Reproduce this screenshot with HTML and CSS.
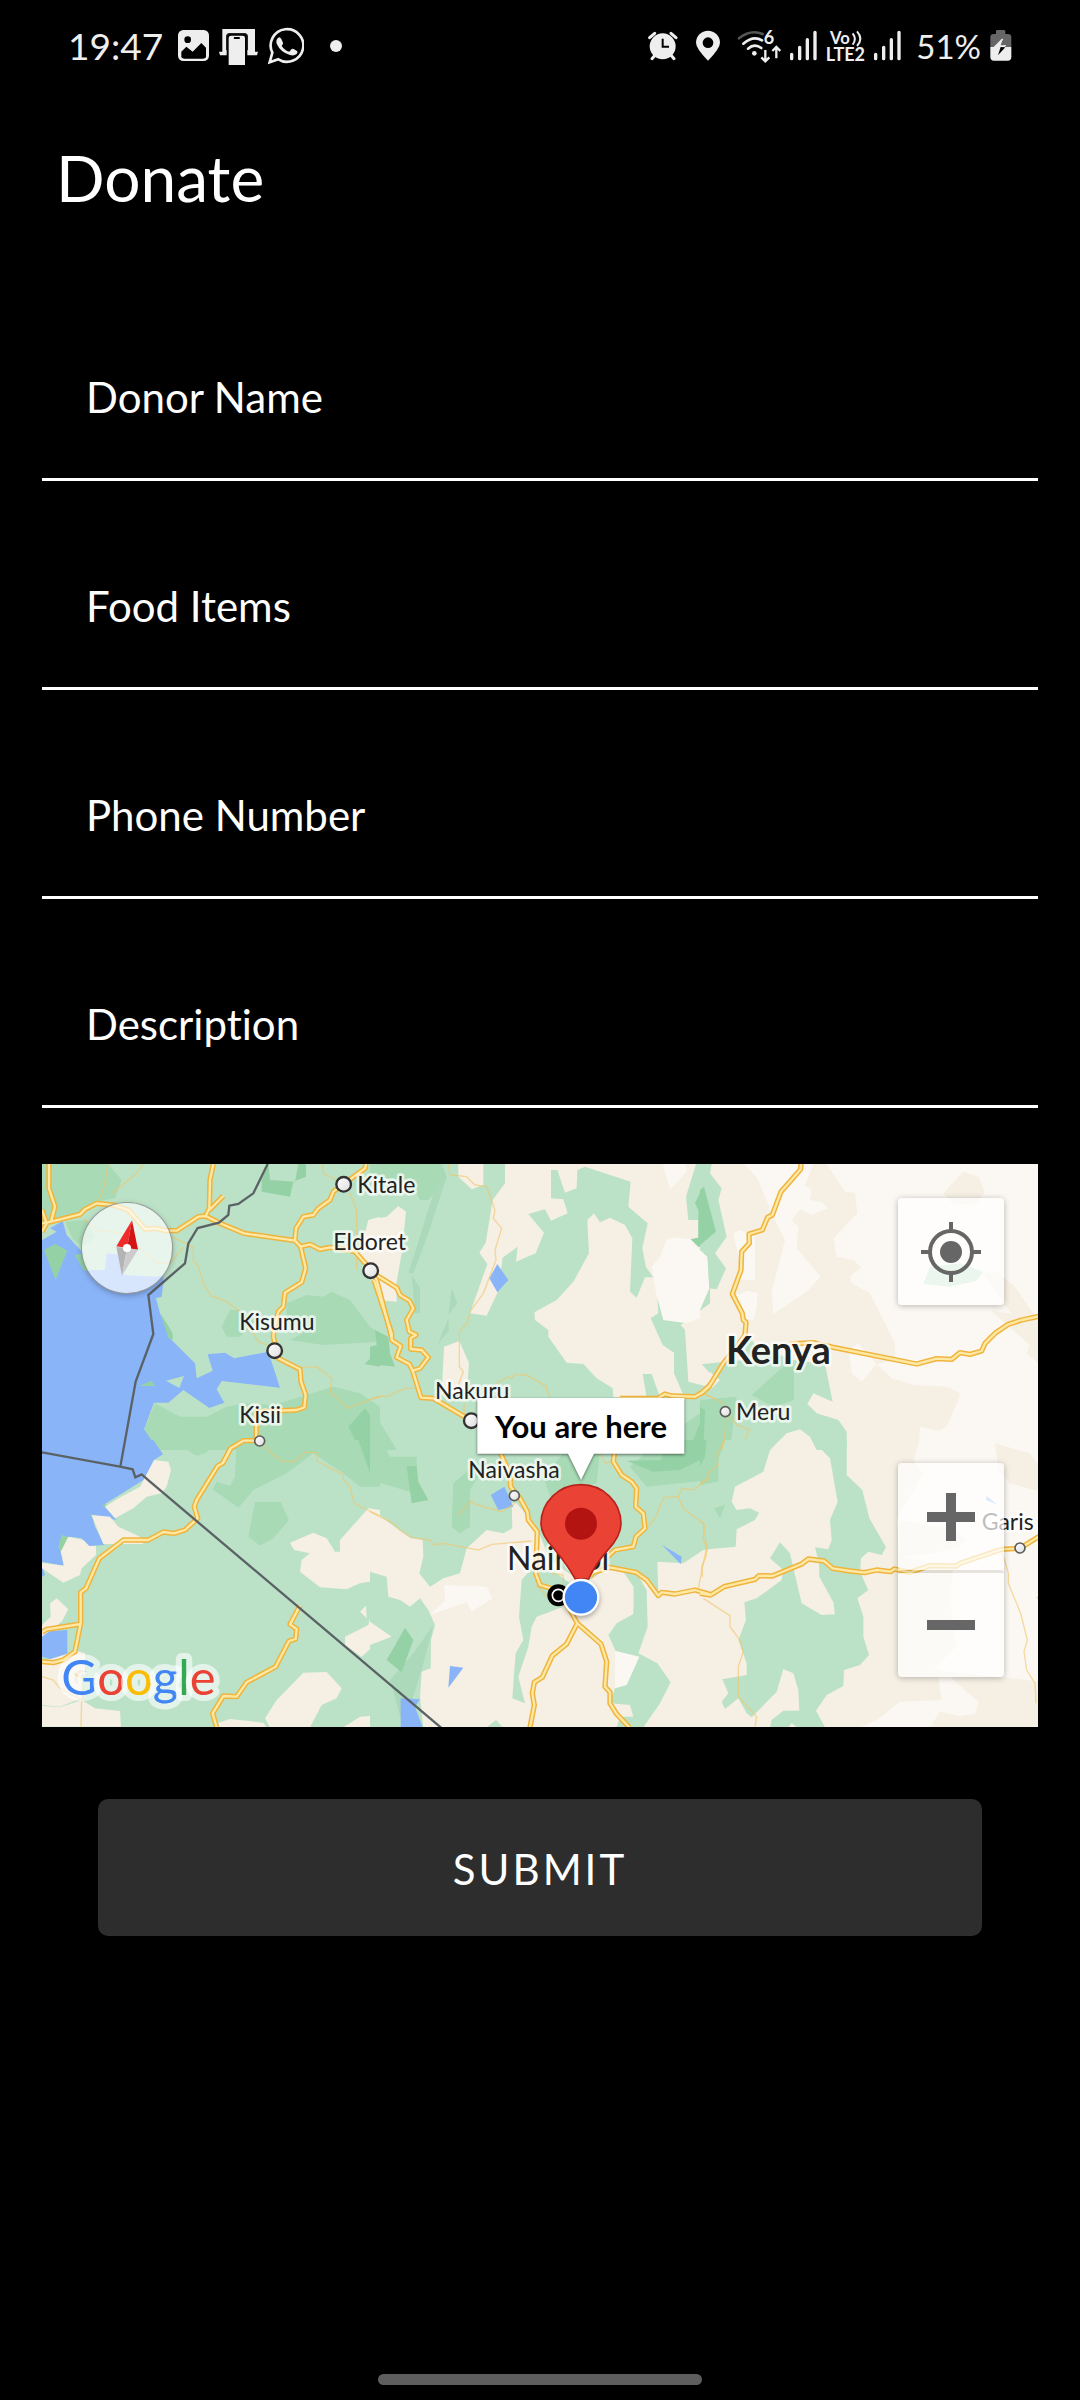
FILE: index.html
```html
<!DOCTYPE html>
<html lang="en">
<head>
<meta charset="utf-8">
<meta name="viewport" content="width=device-width, initial-scale=1">
<title>Donate</title>
<link rel="stylesheet" href="styles.css">
</head>
<body>
<div class="screen">
  <header class="status">
    <div class="status-side">
      <span class="time">19:47</span>
      <svg class="icon w31" viewBox="414 51 93 114"><rect x="414" y="60" width="93" height="93" rx="16" fill="#eee"/><circle cx="443" cy="89" r="10"/><path d="M424 142v-17l15-15 19 15 26-26 14 14v29q-3 4-9 4h-56q-6 0-9-4z"/></svg>
      <svg class="icon w39" viewBox="543 51 117 114"><path d="M553 57h98v68h-98zM543 125h117l-3 11H546z" fill="#eee"/><path d="M566 165V80q0-10 10-10h42q10 0 10 10v85z"/><path d="M572 165V84q0-7 7-7h35q7 0 7 7v81z" fill="#eee"/><path d="M566 120V80q0-9 10-9h42q10 0 10 9v40" fill="none" stroke="#222" stroke-width="4"/><rect x="587" y="81" width="19" height="6" rx="3"/></svg>
      <svg class="icon w36" viewBox="688 51 108 114"><path d="M693 157l8-29a49 49 0 1 1 18 20z" fill="none" stroke="#eee" stroke-width="8"/><path d="M718 84q5-5 10 3l5 11q1 4-4 9 8 14 23 18l7-8q3-2 6 0l10 6q4 3-1 9-9 7-20 3-29-9-40-34-3-11 4-17z" fill="#eee"/></svg>
      <span class="more"></span>
    </div>
    <div class="status-side tight">
      <svg class="icon w31" viewBox="68 51 93 114"><g stroke="#eee" stroke-width="9" stroke-linecap="round"><path d="M73 83l15-13M152 83l-15-13M80 146l12-14M146 146l-12-14"/></g><circle cx="112" cy="109" r="39" fill="#eee"/><path d="M112 86v24h19" fill="none" stroke="#000" stroke-width="6"/></svg>
      <svg class="icon w24 spaced" viewBox="206 51 72 114"><path d="M242 152q-36-37-36-54a36 36 0 0 1 72 0q0 17-36 54z" fill="#eee"/><circle cx="242" cy="98" r="16"/></svg>
      <svg class="icon w44" viewBox="328 51 132 114"><g fill="none" stroke-width="8" stroke-linecap="round"><path d="M334 85q35-28 71-13" stroke="#555"/><path d="M347 101q30-26 56-10M361 116q19-17 40-2" stroke="#eee"/></g><circle cx="380" cy="130" r="7" fill="#eee"/><text x="408" y="102" font-size="54" font-weight="700" fill="#eee">6</text><path d="M413 120v34M401 142l12 12 12-12M446 145v-34M434 123l12-12 12 12" fill="none" stroke="#eee" stroke-width="7"/></svg>
      <svg class="icon w27" viewBox="489 51 81 114"><path d="M494 133v13M518 112v34M541 89v57M564 67v79" stroke="#eee" stroke-width="10" stroke-linecap="round"/></svg>
      <svg class="icon w39" viewBox="597 51 117 114"><g fill="#eee" font-weight="700"><text x="609" y="101" font-size="50">Vo</text><text x="596" y="153" font-size="54">LTE2</text></g><path d="M677 70q13 17 0 34M690 64q20 22 0 44" fill="none" stroke="#eee" stroke-width="6"/></svg>
      <svg class="icon w27" viewBox="741 51 81 114"><path d="M746 133v13M770 112v34M793 89v57M816 67v79" stroke="#eee" stroke-width="10" stroke-linecap="round"/></svg>
      <span class="battery">51%</span>
      <svg class="icon w22" viewBox="1079 51 66 114"><path d="M1097 72v-8q0-4 4-4h20q4 0 4 4v8h8q10 0 10 10v29h-63V82q0-10 10-10z" fill="#666"/><path d="M1080 111h63v30q0 11-11 11h-41q-11 0-11-11z" fill="#eee"/><path d="M1117 87l-25 25 14 2-9 21" fill="none" stroke="#eee" stroke-width="5"/><path d="M1117 88l-6 18 17-1-23 29 7-23h-18z" fill="#eee"/><path d="M1125 112l-22 24 8-25z"/></svg>
    </div>
  </header>

  <h1>Donate</h1>

  <form class="form">
    <div class="field"><input id="donor" type="text" placeholder=" "><label for="donor">Donor Name</label></div>
    <div class="field"><input id="food" type="text" placeholder=" "><label for="food">Food Items</label></div>
    <div class="field"><input id="phone" type="tel" placeholder=" "><label for="phone">Phone Number</label></div>
    <div class="field"><input id="description" type="text" placeholder=" "><label for="description">Description</label></div>

    <div class="map">
      <svg class="map-canvas" viewBox="0 0 2988 1689" preserveAspectRatio="xMidYMid slice">
        <rect class="land" width="2988" height="1689"/>

        <!-- west -->
        <g transform="translate(-6 -12)">
          <path class="mid" d="M6 12H205L245 60 225 115 170 125 120 160 40 185 6 190zM75 185L140 180 165 230 130 260 100 240zM740 430L800 405 850 410 875 395 930 420 990 500 1020 520V545L850 555 750 540 790 520 740 480zM545 500L570 450H600L650 480 600 530H560zM345 730L420 770H500L560 740 620 730 700 735 880 680 960 700 1020 740V870H330L312 810z"/>
          <path class="dark" d="M665 60L685 12 690 60 765 65 775 12H798V50L760 65 750 110 665 95zM925 800L975 745 1020 800V870H960zM973 612L1020 570V620z"/>
          <path class="water" d="M6 240L50 215 30 205 68 183 80 225 130 280V330H195L200 280 240 285 250 345 350 350 370 345V370L365 410 348 415 360 460 395 540 465 610 470 655 518 632 503 583 555 578 583 595 685 575 720 683 545 663 530 688 553 728 508 744 430 690 385 728H342L312 808 355 870H6z"/>
          <path class="dark" d="M12 270L45 252 82 272 47 360zM297 678L335 662 345 678zM105 285L125 280 150 335 130 330zM362 460L398 520V540L385 535z"/>
          <path class="land" d="M378 662L432 648 418 684z"/>
          <path class="cream" d="M1020 170L985 180 960 280 975 330 1020 340z"/>
        </g>
        <g transform="translate(-6 828)">
          <path class="mid" d="M390 0H520L500 38 470 47zM590 0H1020V140H960L910 100 820 40 740 100 640 150 595 203 518 148 530 125 570 138 585 110zM645 186H722L747 240 700 295 660 317 625 290z"/>
          <path class="dark" d="M955 0H1020V95L990 98z"/>
          <path class="water" d="M6 0H340L369 43 342 60 335 105 190 195 230 240 155 225 165 260 193 315 145 318 125 295 90 290 65 330 70 377 6 365zM6 378L15 405 6 410zM6 575L82 570V650L50 662 6 650z"/>
          <path class="dark" d="M65 285L88 292 62 335 55 320zM187 195L198 190V206zM150 223L160 224 156 236z"/>
          <path class="cream" d="M342 60L385 65 393 90 380 140 365 160 320 170 280 205 225 235 195 200 235 175 300 140zM155 225L210 230 235 260 300 290 310 312H190zM85 290L130 300 148 318H168V345L125 385 120 405 70 428 6 385V368L72 377 62 335zM30 490L50 475 85 508 65 545 6 590V555L32 530zM6 665L110 632 135 640V780L165 805 240 813 243 860H6z"/>
          <path class="land" d="M6 795L60 800 125 775V700L200 760 165 805 125 780 60 802 6 797z"/>
          <path class="cream" d="M750 308L820 278 860 295 885 335H900V300L985 205 1020 210V420L960 430 920 448 840 442 780 395 785 360 810 340 762 330zM960 515L978 497 980 535zM915 590L985 555 990 535 1020 545V600L965 650 915 615zM790 698L860 696 905 745 890 775 845 795 810 862H690L675 835 710 780zM530 850L570 837 670 848 680 862H530zM910 862L960 830 1020 825V862z"/>
        </g>

        <!-- centre -->
        <g transform="translate(984 -12)">
          <path class="mid" d="M0 12H215L230 50 175 120H150L120 60 0 50zM0 760L20 770 80 870H0zM945 790L1020 740V870H930z"/>
          <path class="ridge" d="M232 45L195 85 115 340H130L175 220zM245 385L262 430 235 465zM235 475L202 555 237 510zM125 345L150 385V460H135z"/>
          <path class="cream" d="M265 12H340V75L305 88 265 50zM405 12V70L368 120 347 248 328 278 352 312 300 460 350 467 384 395 398 293 443 260 438 305 497 280 522 218 475 162 525 148 543 182 593 160 580 118 543 115V30H562L585 98 620 85 622 30 645 20 782 65 775 140 833 190 817 265 828 322 850 352 1020 330V12zM652 180L672 160 690 187 720 173 765 195 787 235 780 395 800 413 825 352H860L865 460 842 475 878 555 912 578V640L940 705 870 712 845 642H818L830 712H730L728 685 680 655 640 612 590 608 535 530V510L495 480 493 457 560 420 610 365 657 280zM932 495L1020 430V612H995L1020 640V682L955 665 945 510zM0 180L50 170 85 138 108 155 95 280 80 365V425L45 422 20 380 0 350zM222 560L268 543 297 610 290 700H215z"/>
          <path class="light" d="M890 240L910 232 962 238 1015 300V380L990 430V475L950 490 880 480 858 400 845 320 870 290zM878 12H945L950 35 900 90z"/>
          <path class="land" d="M978 12H1020V240L985 238V180H955L948 110z"/>
          <path class="dark" d="M15 510L55 530 60 580 75 620 0 612V560L20 555zM962 238L1020 225V260L985 260zM1003 70L1020 140V230L985 238V150L975 130zM985 800L1010 770V870H960z"/>
          <path class="water" d="M382 312L415 360 382 397 358 355z"/>
        </g>
        <g transform="translate(984 828)">
          <path class="mid" d="M0 0H30L60 50H140V80L120 155 0 120zM250 130L320 70H350L300 150V260L270 280 245 260zM580 40L690 30 680 130 540 170 520 110zM780 80L870 0H1020V120L830 140z"/>
          <path class="dark" d="M110 78H140L145 125 175 180 125 190zM770 62L870 60 900 0H1020L1010 50 930 90 850 95z"/>
          <path class="cream" d="M0 205L80 265 120 293 158 300 160 350 148 400 180 440 220 415 270 400 290 325 350 270 400 280 427 265 425 190H440L500 260 540 360 640 430 720 385 800 400 865 465 862 365 940 370 1000 330 1020 325V862H0z"/>
          <path class="land" d="M455 420L490 380 560 400 640 460 580 500 500 530 485 560 475 620 445 710 465 790 427 775 437 640 460 600 447 530zM0 395L50 410 55 470 90 480 120 500 150 475 175 510 195 555 183 600 182 685 155 695 150 770 160 862H0V615L65 590 0 545zM740 550L790 522V440L760 395 800 400 830 450 833 560 805 640 862 670 902 727 870 790 820 862H740L750 830 790 830 780 795 720 790 735 745 740 640 715 585zM350 862L378 840 398 862z"/>
          <path class="cream" d="M640 440L700 390 750 385 790 440V500L700 560 640 500z"/>
          <path class="light" d="M222 435L350 440 368 475 305 515 290 487 180 525 225 480zM735 632L808 650 770 735 735 745z"/>
          <path class="ridge" d="M190 555L155 690 100 862 60 720 130 640z"/>
          <path class="dark" d="M105 563L130 600 95 697 50 660z"/>
          <path class="water" d="M403 140L430 200 385 210 362 165zM240 678L280 683 235 743zM92 775L150 778 135 800 158 862H92zM876 315L935 350 933 373z"/>
        </g>

        <!-- east -->
        <g transform="translate(1974 -12)">
          <path class="cream" d="M30 12H1020V870H30z"/>
          <path class="light" d="M135 12H340L315 75 335 90 330 120 365 125 383 145 335 165 300 148 275 180 295 200 290 265 362 350 320 395 220 462 215 395 255 240 215 160 175 60zM380 12L435 95 465 98 472 160 400 235 410 290 460 300 483 322 450 350 455 370 510 400 585 550V600L530 612 575 655 640 675 740 680 780 700 775 720 740 800 715 812 660 800 655 870H1020V12zM0 270L22 290 28 385 0 450zM100 220L120 210 165 230V360H105L120 310zM110 405L145 392 172 400 170 440 160 480 130 475zM445 570L475 550 530 612 485 665 455 640z"/>
          <path class="cream" d="M848 340L890 335 940 375 1000 460 1020 480V615L980 580 990 555 870 450 935 462zM890 850L1020 885H890zM730 100L790 35 835 50 855 95 830 130 760 135z"/>
          <path class="land" d="M0 12H35L30 40 65 85 55 120 80 230 45 280 78 325 50 388 28 385 22 290 0 270zM10 612L130 600 140 520 170 560 280 600 375 612 398 725 340 700 322 732 350 760 415 780 440 815V870H350L330 830 300 808 260 820 210 870H0V720L60 660 35 640zM690 320L780 310 850 335 830 362 750 380 670 372z"/>
          <path class="mid" d="M155 705L250 620H282V720L220 740zM0 720L110 710 90 870H0z"/>
          <path class="dark" d="M12 80L48 215 0 255V90zM0 740L15 750 10 870H0z"/>
        </g>
        <g transform="translate(1974 828)">
          <path class="cream" d="M30 30H1020V862H30z"/>
          <path class="light" d="M660 0H1020V725L980 720 700 690 770 620 750 480 760 380 600 350 590 240 670 100 640 60zM480 862L530 840 600 785 725 780 715 710H750L800 755 837 785 825 822 780 828 720 815 690 862z"/>
          <path class="cream" d="M885 10L990 40 1020 80V155L930 130 895 90zM600 240L680 255 760 270 800 300 780 320 700 340 600 350z"/>
          <path class="land" d="M0 0H235L210 30 190 95 105 140 95 185 110 210 150 205 177 218 165 240 110 268 107 320 0 330zM342 0H440V105L487 150 508 235 558 322 545 345 505 335 483 355 480 395 505 450 472 475 490 530V590L507 645 480 675 432 690 430 738 380 765 348 812 375 862H210L215 840 250 812H298L295 750 280 700 250 687 230 755 155 832 140 820 115 775 75 807 65 785 85 760 67 718 140 705V670L115 600 138 540 133 487 170 475 245 420 250 390 210 355 240 307 270 340 305 490 365 525 405 523 400 487 358 410 357 370 345 322 385 328 395 300 390 240 413 185 390 55 345 10z"/>
          <path class="mid" d="M0 0H75L55 60V125L0 135zM42 205L75 195 60 235z"/>
          <path class="dark" d="M0 0H20L15 50 0 80z"/>
          <path class="cream" d="M265 862L275 850 292 862z"/>
          <path class="water" d="M860 168L893 194 858 180z"/>
        </g>

        <g class="minor">
          <path transform="translate(-6 -12)" d="M205 12L190 90 170 130M310 12L290 40 215 100M130 175L170 210 250 220 350 310H390L430 262M395 230L460 262V300L475 320 490 370 513 408 560 425 600 455 640 520 655 545 690 558M848 12L850 40 890 60M930 100L950 150V330M785 622L830 620 875 655 870 700 890 710 920 745 1020 708"/>
          <path transform="translate(-6 828)" d="M665 10L700 45 730 65H765L795 37H828L833 65 910 105V120L930 140 942 190 1020 228M6 710L40 720 60 745 125 780 123 862M100 700L130 715 128 780"/>
          <path transform="translate(984 -12)" d="M235 12L240 45 290 50 315 75 350 80 375 150 370 175 395 205 375 270 378 300 340 400 300 455 292 488 268 515V620L280 635 265 675M282 730V770M0 718L35 708 50 710 105 685H145M380 670L415 650 425 655 435 643 470 645 530 680 530 690 540 712M1000 700L1030 715"/>
          <path transform="translate(984 828)" d="M0 215L70 250 90 270 125 293 180 300 190 315 220 310 325 330 365 313 485 303M265 225L305 182 310 190 395 215 435 190M835 260L855 235 882 172 925 170 935 145 970 150 1020 110M925 170L940 205 1000 250 1010 320 985 445M500 435L540 480M545 400L580 405V440M690 40L705 70 725 65"/>
          <path transform="translate(1974 -12)" d="M10 700L65 725 95 775 110 795 148 808 135 838M78 770L75 820 65 870M110 590L200 580 270 550"/>
          <path transform="translate(1974 828)" d="M75 0L50 45 55 75 25 100 20 120 0 130M0 245L12 250 10 300 22 320 18 350 5 380 8 410M10 475L90 527V560L120 600 130 635 115 680V770L170 830 165 862M905 330L925 400V430L962 520 982 600 972 635 980 690 1005 730 1008 790M1010 470L1020 485"/>
        </g>

        <defs>
          <g id="roads">
            <path transform="translate(-6 -12)" d="M27 12V85L45 140 33 185M6 150L20 190 6 215M6 190L33 185 120 163 135 148 170 130 220 135 265 150 315 207 350 205 375 212H410L475 170 497 168 545 192 612 220 765 242 782 260 810 253 840 268 870 262 900 265 945 275 985 320 1010 360 1055 532M520 12L510 60 508 145 497 168M508 150L550 108M978 12L975 25 880 95 870 120 835 145 820 165 790 170 768 205 765 242 782 260 797 325 785 367 735 398 730 440 715 455 703 500 700 530 715 595 780 628 783 665 797 705 793 742 770 750 650 755 648 842 610 842 572 865 548 910"/>
            <path transform="translate(-6 828)" d="M572 25L548 70 533 78 470 180 463 200 473 235 435 270 402 280 370 276 325 300H250L178 355 138 445 122 457V550L105 635 70 660 40 668 6 665M6 577L20 568 122 552M780 497L750 553 770 567 767 597 747 603 707 680 620 727 590 770 550 768 518 820 530 862"/>
            <path transform="translate(984 -12)" d="M10 340L80 383 90 405 118 422 130 445 110 480 118 515 138 525 122 535V567L155 570 175 592 150 625 128 632M12 360L65 520V540L92 558 80 592 118 612 128 632 153 713 190 715 300 780M750 715H865L885 702 905 708 975 710 1000 695 1020 675"/>
            <path transform="translate(984 828)" d="M392 40L420 105 422 140 450 175 472 215 475 240 502 275 497 400 510 435 560 450 600 510 622 550 590 612 547 647 517 712 493 727 487 760 493 795 480 862M622 550L693 612 710 665 705 740 720 757V790L740 822 778 862M733 40L730 65 755 105 785 125 800 145 797 200 820 220 825 265 798 290 790 320 735 330 690 370 660 410M660 400L720 382 798 397 830 420 865 467 875 457 915 462 975 450 1020 463"/>
            <path transform="translate(1974 -12)" d="M303 12L302 28 243 95 217 165 203 172 187 210 147 222 148 250 125 275 123 330 97 402 127 460 130 480 138 487 135 525 110 560 70 610 27 680 0 703M270 552L340 548 400 562 650 612 710 596 755 598 780 578 810 583 845 573 855 550 885 520 925 493 965 480 1020 468"/>
            <path transform="translate(1974 828)" d="M0 460L32 465 72 440 165 418 177 407 217 408 305 372 325 357 372 363 398 385 450 393 493 398 530 390 572 395 583 387 630 397 690 377 770 378 780 370 905 328 960 325 1020 288"/>
          </g>
        </defs>
        <use href="#roads" class="road-edge"/>
        <use href="#roads" class="road-fill"/>
        <g class="border">
          <path transform="translate(-6 -12)" d="M683 12L640 100 595 132 568 137 565 165 537 188 473 204 445 250 435 310 325 405 340 522 287 665 241 920"/>
          <path transform="translate(-6 828)" d="M6 37L240 80 278 88 286 112 305 103 330 125 1208 867"/>
        </g>

        <defs><linearGradient id="dot" x1="0" y1="0" x2="1" y2="1"><stop offset="0" stop-color="#fff"/><stop offset="1" stop-color="#ddd"/></linearGradient></defs>
        <g class="town">
          <circle cx="905" cy="61" r="22"/><circle cx="986" cy="320" r="22"/><circle cx="698" cy="560" r="22"/><circle cx="1288" cy="770" r="22"/>
        </g>
        <g class="town small">
          <circle cx="653" cy="831" r="15"/><circle cx="1417" cy="995" r="15"/><circle cx="2050" cy="743" r="15"/><circle cx="2934" cy="1152" r="15"/>
        </g>
        <g class="place">
          <text x="946" y="86">Kitale</text><text x="874" y="258">Eldoret</text><text x="592" y="498">Kisumu</text><text x="592" y="778">Kisii</text>
          <text x="1179" y="706">Nakuru</text><text x="1279" y="941">Naivasha</text><text x="2082" y="768">Meru</text><text x="2819" y="1098">Garis</text>
          <text class="city" x="1395" y="1218">Nairobi</text>
          <text class="country" x="2052" y="600">Kenya</text>
        </g>

        <circle cx="1549" cy="1294" r="33"/><circle cx="1549" cy="1294" r="18" fill="none" stroke="#fff" stroke-width="5"/>
        <path d="M1600 1245Q1575 1200 1536 1154Q1497 1112 1497 1079A120 117 0 0 1 1737 1079Q1737 1116 1696 1160Q1660 1200 1640 1245z" fill="#ea4335" stroke="#b9221b" stroke-width="5"/>
        <circle cx="1617" cy="1079" r="48" fill="#b31412"/>
        <circle class="here" cx="1617" cy="1300" r="52"/>
        <path class="bubble" d="M1306 702H1927V869H1656L1617 948 1578 869H1306z"/>
        <text class="bubble-text" x="1617" y="822">You are here</text>
        <text class="logo" x="58" y="1594"><tspan fill="#4285f4">G</tspan><tspan fill="#ea4335">o</tspan><tspan fill="#fbbc05">o</tspan><tspan fill="#4285f4">g</tspan><tspan fill="#34a853">l</tspan><tspan fill="#ea4335">e</tspan></text>
      </svg>

      <button class="compass" type="button" aria-label="Reset north"><svg viewBox="125 130 270 270"><path d="M275 182L228 260 260 265z" fill="#ee2c2c"/><path d="M275 182L293 270 260 265z" fill="#d31515"/><path d="M228 262L260 265 245 348z" fill="#b4b4b4"/><path d="M260 265L293 270 245 348z" fill="#ccc"/><circle cx="260" cy="265" r="12" fill="#fff"/></svg></button>
      <button class="control locate" type="button" aria-label="My location"><svg viewBox="0 0 60 60"><circle cx="30" cy="30" r="21" fill="none" stroke="#666" stroke-width="4"/><circle cx="30" cy="30" r="11" fill="#666"/><path d="M30 0v8M30 52v8M0 30h8M52 30h8" stroke="#666" stroke-width="4"/></svg></button>
      <div class="zoom">
        <button class="control" type="button" aria-label="Zoom in"><svg viewBox="0 0 60 60"><path d="M30 6v48M6 30h48" stroke="#666" stroke-width="10"/></svg></button>
        <button class="control" type="button" aria-label="Zoom out"><svg viewBox="0 0 60 60"><path d="M6 30h48" stroke="#666" stroke-width="10"/></svg></button>
      </div>
    </div>

    <button class="submit" type="submit">SUBMIT</button>
  </form>
  <div class="handle"></div>
</div>
</body>
</html>
```
FILE: styles.css
```css
* { box-sizing: border-box; }
body { margin: 0; background: #000; color: #fff; font-family: Lato, "Open Sans", sans-serif; font-variant-ligatures: none; }
button, input { font: inherit; color: inherit; }

.screen { min-height: 100vh; display: flex; flex-direction: column; }

.status { display: flex; justify-content: space-between; align-items: center; height: 92px; padding: 0 68px 0 68px; color: #eee; }
.status-side { display: flex; align-items: center; gap: 10px; }
.status-side.tight { gap: 9px; }
.time { width: 100px; font-size: 37px; line-height: 40px; }
.battery { margin-left: 6px; font-size: 33px; line-height: 40px; }
.icon { display: block; height: 38px; flex: none; }
.spaced { margin: 0 8px; }
.w22 { width: 22px; }
.w24 { width: 24px; }
.w27 { width: 27px; }
.w31 { width: 31px; }
.w36 { width: 36px; }
.w39 { width: 39px; }
.w44 { width: 44px; }
.more { width: 12px; height: 12px; margin-left: 16px; border-radius: 50%; background: #eee; }

h1 { margin: 50px 56px 0; font-size: 64px; line-height: 72px; font-weight: 400; }

.form { display: flex; flex-direction: column; padding: 58px 42px 0; }
.field { display: grid; height: 177px; margin-top: 32px; border-bottom: 3px solid #fff; }
.field input, .field label { grid-area: 1 / 1; align-self: center; padding: 12px 44px 0; font-size: 42px; line-height: 56px; }
.field input { width: 100%; border: 0; background: none; outline: none; }
.field label { pointer-events: none; }
.field input:not(:placeholder-shown) + label { visibility: hidden; }

.map { position: relative; height: 563px; margin-top: 56px; overflow: hidden; }
.map-canvas { display: block; width: 100%; height: 100%; }
.land { fill: #bbe2c7; }
.mid { fill: #a7dab5; }
.dark { fill: #94d2a5; }
.ridge { fill: #abd9b9; }
.cream { fill: #f5efe4; }
.light { fill: #fbf8f3; }
.water { fill: #8ab4f8; }
.minor { fill: none; stroke: #f3c566; stroke-opacity: .6; stroke-width: 4; }
.road-edge, .road-fill { fill: none; stroke-linejoin: round; stroke: #efb43c; stroke-width: 16; }
.road-fill { stroke: #fee8a3; stroke-width: 7; }
.border { fill: none; stroke: #5b6266; stroke-width: 7; }
.town { fill: url(#dot); stroke: #333; stroke-width: 7; }
.town.small { stroke: #5c5c5c; stroke-width: 5; }
.place { font-size: 69px; fill: #222; stroke: #fff; stroke-opacity: .7; stroke-width: 16; stroke-linejoin: round; paint-order: stroke; }
.city { font-size: 96px; }
.country { font-size: 114px; font-weight: 700; }
.here { fill: #4285f4; stroke: #fff; stroke-width: 7; filter: drop-shadow(0 6px 8px #0005); }
.bubble { fill: #fff; filter: drop-shadow(0 3px 5px #0008); }
.bubble-text { font-size: 93px; font-weight: 700; text-anchor: middle; }
.logo { font-size: 147px; stroke: #fff; stroke-opacity: .6; stroke-width: 36; stroke-linejoin: round; paint-order: stroke; }

.control { display: grid; place-items: center; width: 106px; height: 107px; padding: 0; border: 0; border-radius: 4px; background: rgba(255, 255, 255, .7); }
.control svg { width: 60px; }
.locate { position: absolute; top: 34px; right: 34px; box-shadow: 0 1px 6px #0004; }
.zoom { position: absolute; right: 34px; bottom: 50px; border-radius: 4px; box-shadow: 0 1px 6px #0004; }
.zoom .control + .control { border-top: 3px solid rgba(0, 0, 0, .08); background-clip: padding-box; }
.compass { position: absolute; top: 39px; left: 40px; width: 90px; height: 90px; padding: 0; border: 0; border-radius: 50%; background: rgba(255, 255, 255, .66); box-shadow: 0 0 0 1px #999, 0 2px 6px #0005; }
.compass svg { display: block; width: 90px; }

.submit { height: 137px; margin: 72px 56px 0; padding-top: 4px; border: 0; border-radius: 10px; background: #2d2d2d; font-size: 42px; letter-spacing: 3px; }
.handle { width: 30%; height: 11px; margin: auto auto 15px; border-radius: 6px; background: #5e5e5e; }
```
